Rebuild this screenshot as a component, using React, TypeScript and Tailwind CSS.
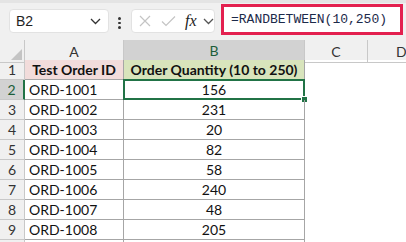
import React from "react";

const ROWS: [string, string][] = [
  ["ORD-1001", "156"],
  ["ORD-1002", "231"],
  ["ORD-1003", "20"],
  ["ORD-1004", "82"],
  ["ORD-1005", "58"],
  ["ORD-1006", "240"],
  ["ORD-1007", "48"],
  ["ORD-1008", "205"],
  ["", ""],
];

const cellFont = { fontFamily: "Lato, 'Liberation Sans', sans-serif" };

function Chevron({ className }: { className?: string }) {
  return (
    <svg width="11" height="7" viewBox="0 0 11 7" className={className}>
      <path d="M1 1l4.5 4.5L10 1" fill="none" stroke="currentColor" strokeWidth="1.3" />
    </svg>
  );
}

function FormulaBar() {
  return (
    <div className="h-[40px] bg-[#f0f0f0] border-t-[3px] border-[#e4e4e4] flex items-start relative">
      <div className="absolute left-[9px] top-[6px] w-[100px] h-[24px] bg-white rounded-[4px] border border-[#e2e2e2] flex items-center pl-[6px] pr-[7px]">
        <span className="text-[14px] text-[#1f1f1f] flex-1" style={{ fontFamily: "'Liberation Sans', sans-serif" }}>
          B2
        </span>
        <Chevron className="text-[#333]" />
      </div>
      <div className="absolute left-[118px] top-[14px] flex flex-col gap-[2px]">
        <span className="w-[2.5px] h-[2.5px] bg-[#333] rounded-full" />
        <span className="w-[2.5px] h-[2.5px] bg-[#333] rounded-full" />
        <span className="w-[2.5px] h-[2.5px] bg-[#333] rounded-full" />
      </div>
      <div className="absolute left-[131px] top-[6px] w-[84px] h-[24px] bg-white rounded-[4px] border border-[#e2e2e2] flex items-center">
        <svg width="12" height="12" viewBox="0 0 12 12" className="ml-[7px]">
          <path d="M1 1l10 10M11 1L1 11" stroke="#c4c4c4" strokeWidth="1.2" />
        </svg>
        <svg width="15" height="12" viewBox="0 0 15 12" className="ml-[10px]">
          <path d="M1 6.5l4 4L14 1.5" fill="none" stroke="#c4c4c4" strokeWidth="1.2" />
        </svg>
        <span
          className="ml-[9px] text-[16px] italic text-[#222] leading-none"
          style={{ fontFamily: "'Liberation Serif', serif" }}
        >
          fx
        </span>
        <Chevron className="ml-[6px] text-[#555]" />
      </div>
      <div className="absolute left-[221px] top-[1px] w-[182px] h-[31px] bg-white border-[3px] border-[#e3204f] flex items-center pl-[7px]">
        <span className="text-[13px] text-[#1c2a4a]" style={{ fontFamily: "'Liberation Mono', monospace" }}>
          =RANDBETWEEN(10,250)
        </span>
      </div>
    </div>
  );
}

function ColHeader() {
  return (
    <div className="grid grid-cols-[25px_99px_181px_63px_1fr] h-[20px] bg-[#f0f0f0] text-[14px] text-[#333]" style={cellFont}>
      <div className="border-r border-b border-[#c8c8c8] relative">
        <svg width="11" height="11" viewBox="0 0 11 11" className="absolute right-[2px] bottom-[2px]">
          <path d="M11 0L11 11L0 11Z" fill="#c4c4c4" />
        </svg>
      </div>
      <div className="border-r border-b border-[#c8c8c8] flex items-center justify-center">A</div>
      <div className="border-r border-[#c8c8c8] border-b-2 border-b-[#217346] bg-[#d2d2d2] flex items-center justify-center text-[#1d5e3a]">
        B
      </div>
      <div className="border-r border-b border-[#c8c8c8] flex items-center justify-center">C</div>
      <div className="border-b border-[#c8c8c8] flex items-center pl-[28px]">D</div>
    </div>
  );
}

export default function App() {
  return (
    <div className="w-[406px] h-[242px] overflow-hidden bg-white">
      <FormulaBar />
      <ColHeader />
      <div className="grid grid-cols-[25px_99px_181px_63px_1fr] auto-rows-[20px] text-[14px] text-[#111]" style={cellFont}>
        <div className="bg-[#f0f0f0] border-r border-b border-[#c8c8c8] flex items-center justify-center text-[#333]">1</div>
        <div className="bg-[#f2dcdb] border-r border-b border-[#a6a6a6] flex items-center justify-center font-bold">
          Test Order ID
        </div>
        <div className="bg-[#d8e4bc] border-r border-b border-[#a6a6a6] flex items-center justify-center font-bold">
          Order Quantity (10 to 250)
        </div>
        <div />
        <div />
        {ROWS.map(([id, qty], i) => {
          const n = i + 2;
          const sel = n === 2;
          const last = i === ROWS.length - 1;
          return (
            <React.Fragment key={n}>
              <div
                className={`border-b border-[#c8c8c8] flex items-center justify-center ${
                  sel ? "bg-[#d2d2d2] text-[#1d5e3a] border-r-2 border-r-[#217346]" : "bg-[#f0f0f0] text-[#333] border-r"
                }`}
              >
                {last ? "" : n}
              </div>
              <div className="border-r border-b border-[#a6a6a6] flex items-center pl-[4px]">{id}</div>
              <div className="border-r border-b border-[#a6a6a6] flex items-center justify-center relative">
                {qty}
                {sel && (
                  <>
                    <div className="absolute left-[-1px] top-[-1px] right-[-1px] bottom-[-1px] border-2 border-[#217346]" />
                    <div className="absolute right-[-4px] bottom-[-4px] w-[7px] h-[7px] bg-[#217346] border border-white" />
                  </>
                )}
              </div>
              <div />
              <div />
            </React.Fragment>
          );
        })}
      </div>
    </div>
  );
}
